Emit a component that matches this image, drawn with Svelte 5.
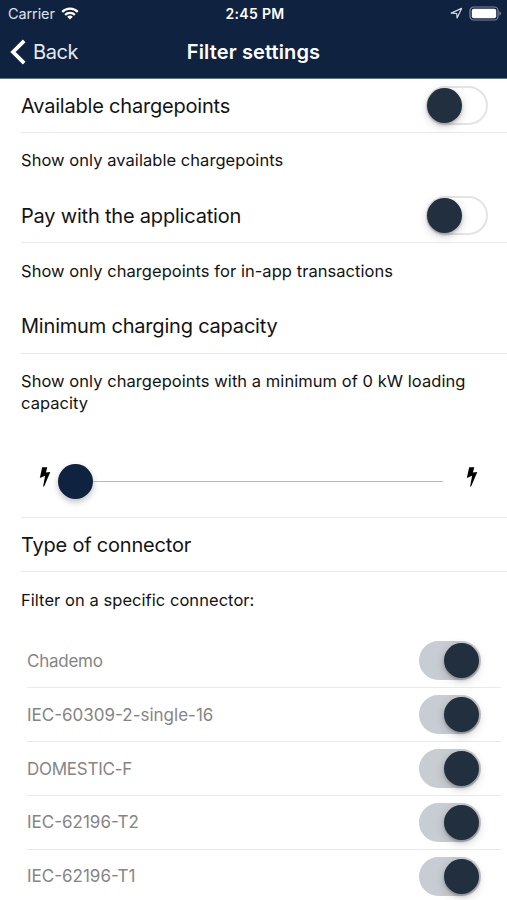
<script>
  let available = false;
  let inApp = false;
  let connectors = [
    { name: "Chademo", on: true, tight: true },
    { name: "IEC-60309-2-single-16", on: true },
    { name: "DOMESTIC-F", on: true, tight: true },
    { name: "IEC-62196-T2", on: true },
    { name: "IEC-62196-T1", on: true },
  ];
</script>

<div class="screen">
  <header>
    <div class="status">
      <div class="carrier">
        <span>Carrier</span>
        <svg width="18" height="13" viewBox="0 0 18 13">
          <g fill="none" stroke="#fff" stroke-width="2.2">
            <path d="M1.2 4.9a11 11 0 0 1 15.6 0" />
            <path d="M4.1 7.9a7 7 0 0 1 9.8 0" />
          </g>
          <path d="M9 12.6 6.2 9.8a4 4 0 0 1 5.6 0z" fill="#fff" />
        </svg>
      </div>
      <span class="time">2:45 PM</span>
      <div class="indicators">
        <svg width="13" height="13" viewBox="0 0 13 13">
          <path d="M11.6 1.4 7.1 11 6.7 6.5 1.2 6.1z" fill="none" stroke="#d5dbe4" stroke-width="1.2" stroke-linejoin="round" />
        </svg>
        <svg width="33" height="15" viewBox="0 0 33 15">
          <rect x="1" y="1" width="28" height="13" rx="3.6" fill="none" stroke="#7c889b" stroke-width="1.2" />
          <rect x="2.8" y="2.8" width="24.4" height="9.4" rx="2" fill="#fff" />
          <path d="M30.4 5.2q1.6 .8 1.6 2.3t-1.6 2.3z" fill="#7c889b" />
        </svg>
      </div>
    </div>
    <nav>
      <button class="back">
        <svg width="17" height="26" viewBox="0 0 17 26">
          <path d="M15.2 1.8 4 13 15.2 24.2" fill="none" stroke="#fff" stroke-width="3.8" />
        </svg>
        <span>Back</span>
      </button>
      <h1>Filter settings</h1>
    </nav>
  </header>

  <main>
    <div class="row">
      <h2>Available chargepoints</h2>
      <button class="toggle" class:on={available} aria-label="Available chargepoints" on:click={() => (available = !available)}>
        <i></i>
      </button>
    </div>
    <p>Show only available chargepoints</p>

    <div class="row">
      <h2>Pay with the application</h2>
      <button class="toggle" class:on={inApp} aria-label="Pay with the application" on:click={() => (inApp = !inApp)}>
        <i></i>
      </button>
    </div>
    <p>Show only chargepoints for in-app transactions</p>

    <div class="row">
      <h2>Minimum charging capacity</h2>
    </div>
    <p>Show only chargepoints with a minimum of 0 kW loading capacity</p>

    <div class="range">
      <svg class="bolt" width="12" height="20" viewBox="0 0 12 20">
        <path d="M3.2 .3H8.3L6.9 5.4 11.3 5 5.1 19.5H4.1L6.1 8.8 .8 10.9z" />
      </svg>
      <div class="slider">
        <div class="knob"></div>
        <div class="bar"></div>
      </div>
      <svg class="bolt" width="12" height="20" viewBox="0 0 12 20">
        <path d="M3.2 .3H8.3L6.9 5.4 11.3 5 5.1 19.5H4.1L6.1 8.8 .8 10.9z" />
      </svg>
    </div>

    <div class="row">
      <h2>Type of connector</h2>
    </div>
    <p>Filter on a specific connector:</p>

    <div class="connectors">
      {#each connectors as connector}
        <div class="connector">
          <span class:tight={connector.tight}>{connector.name}</span>
          <button class="toggle" class:on={connector.on} aria-label={connector.name} on:click={() => (connector.on = !connector.on)}>
            <i></i>
          </button>
        </div>
      {/each}
    </div>
  </main>
</div>

<style>
  :global(body) {
    margin: 0;
    background: #fff;
  }
  .screen {
    box-sizing: border-box;
    width: 507px;
    height: 900px;
    overflow: hidden;
    background: #fff;
    color: #131313;
    font-family: Inter, "Liberation Sans", sans-serif;
  }
  button {
    padding: 0;
    border: 0;
    background: none;
    font: inherit;
    color: inherit;
  }
  h1,
  h2,
  p {
    margin: 0;
    font-weight: 400;
  }
  header {
    box-sizing: border-box;
    height: 79px;
    background: #0f2240;
    border-bottom: 1px solid #58758c;
    color: #fff;
  }
  .status {
    display: grid;
    grid-template-columns: 1fr auto 1fr;
    align-items: center;
    height: 27px;
    padding: 0 5px 0 8px;
    font-size: 14.5px;
  }
  .carrier {
    display: flex;
    align-items: center;
    gap: 6px;
    letter-spacing: -0.1px;
    color: #dde2ea;
  }
  .time {
    font-size: 14px;
    font-weight: 600;
    letter-spacing: 0.3px;
  }
  .indicators {
    display: flex;
    align-items: center;
    justify-content: flex-end;
    gap: 6px;
  }
  nav {
    display: grid;
    grid-template-columns: 1fr auto 1fr;
    align-items: center;
    height: 50px;
    padding: 0 9px 0 9px;
  }
  .back {
    display: flex;
    align-items: center;
    gap: 7px;
    font-size: 20px;
    letter-spacing: -0.4px;
    color: #e6eaf0;
  }
  h1 {
    font-size: 20px;
    font-weight: 600;
    letter-spacing: 0.13px;
  }
  .row {
    box-sizing: border-box;
    display: flex;
    align-items: center;
    justify-content: space-between;
    height: 54px;
    margin-left: 21px;
    padding-right: 19px;
    border-bottom: 1px solid #e9e9e9;
  }
  h2 {
    font-size: 20px;
    line-height: 26px;
    letter-spacing: -0.2px;
  }
  p {
    padding: 16.4px 21px 18px;
    font-size: 16.5px;
    line-height: 22px;
    letter-spacing: 0.05px;
  }
  .toggle {
    box-sizing: border-box;
    display: flex;
    align-items: center;
    width: 62px;
    height: 39px;
    padding: 0;
    border: 2px solid #e4e4e4;
    border-radius: 20px;
    background: #fff;
  }
  .toggle i {
    width: 35px;
    height: 35px;
    margin-left: -1px;
    border-radius: 50%;
    background: #212f3f;
    box-shadow: 0 3px 10px rgba(0, 0, 0, 0.2), 0 2px 3px rgba(0, 0, 0, 0.2);
  }
  .toggle.on {
    justify-content: flex-end;
    border-color: #c8cdd3;
    background: #c8cdd3;
  }
  .range {
    box-sizing: border-box;
    display: flex;
    align-items: center;
    height: 86px;
    margin-left: 21px;
    padding: 13px 29px 0 18px;
    border-bottom: 1px solid #e9e9e9;
  }
  .bolt {
    margin-bottom: 8px;
  }
  .slider {
    flex: 1;
    display: flex;
    align-items: center;
    padding: 0 23px 0 7px;
  }
  .knob {
    width: 35px;
    height: 35px;
    border-radius: 50%;
    background: #0f2240;
    box-shadow: 0 3px 6px rgba(0, 0, 0, 0.25);
  }
  .bar {
    flex: 1;
    height: 1px;
    background: #b8b8b8;
  }
  .connectors {
    padding: 6px 6px 0 27px;
  }
  .connector {
    box-sizing: border-box;
    display: flex;
    align-items: center;
    justify-content: space-between;
    height: 53.8px;
    padding-right: 20px;
    border-bottom: 1px solid #e9e9e9;
    font-size: 17px;
    color: #858585;
  }
  .tight {
    letter-spacing: -0.25px;
  }
</style>
